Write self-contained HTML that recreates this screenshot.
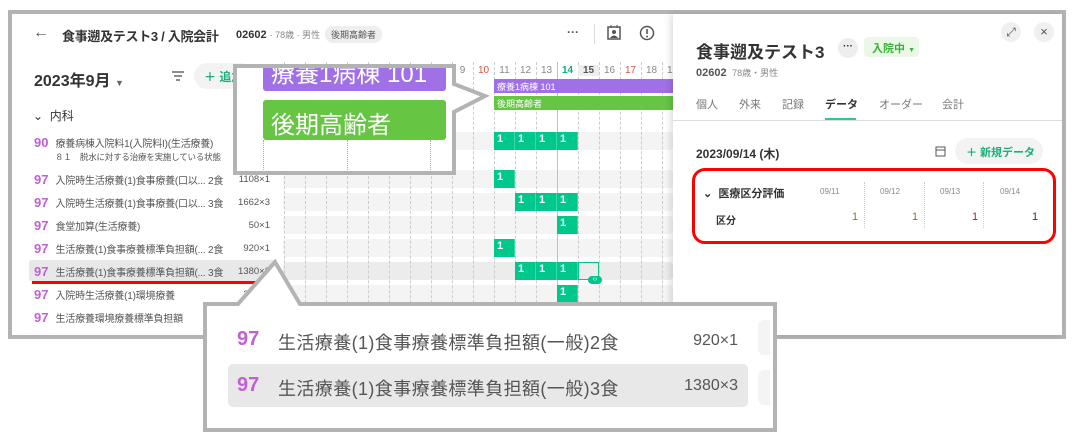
<!DOCTYPE html>
<html><head><meta charset="utf-8"><style>
*{margin:0;padding:0;box-sizing:border-box}
body{width:1074px;height:440px;background:#fff;position:relative;overflow:hidden;font-family:"Liberation Sans","Noto Sans CJK JP",sans-serif;color:#333}
.a{position:absolute;white-space:nowrap}
.num{color:#c25fd6;font-weight:bold;font-size:13px}
.t{font-size:10px;color:#555;letter-spacing:-0.2px}
.q{position:absolute;width:60px;text-align:right;left:210px;font-size:9.5px;color:#555}
.rowbg{position:absolute;left:283px;width:390px;height:18px;background:#f4f4f4;border-radius:4px}
.vl{position:absolute;top:62px;height:276px;border-left:1px dashed #ccc}
.cell{position:absolute;width:21px;height:18px;background:#00c78c;color:#fff;font-weight:bold;font-size:11px;padding:1px 0 0 3px;border-right:1px solid #3ad9a6}
.day{position:absolute;top:65px;font-size:10px;color:#888;width:21px;text-align:center}
</style></head><body>
<div class="a" style="left:8px;top:10px;width:1058px;height:329px;border:4px solid #b3b3b3;background:#fff"></div>
<div class="a" style="left:33px;top:24px;font-size:16px;color:#555">←</div>
<div class="a" style="left:62px;top:26px;font-size:13px;font-weight:bold;color:#333;letter-spacing:-0.3px">食事遡及テスト3 / 入院会計</div>
<div class="a" style="left:236px;top:28px;font-size:11px;font-weight:bold;color:#333">02602 <span style="font-weight:normal;color:#888;font-size:9px">· 78歳 · 男性</span></div>
<div class="a" style="left:325px;top:26px;font-size:9px;color:#555;background:#eee;border-radius:8px;padding:2px 6px">後期高齢者</div>
<div class="a" style="left:567px;top:25px;font-size:12px;color:#555;font-weight:bold">···</div>
<div class="a" style="left:594px;top:24px;width:1px;height:20px;background:#ddd"></div>
<svg class="a" style="left:606px;top:25px" width="16" height="16"><rect x="2" y="2" width="12" height="12" fill="none" stroke="#555" stroke-width="1.5"/><circle cx="8" cy="7" r="2" fill="#555"/><path d="M4 13 Q8 8 12 13" fill="#555"/><line x1="5" y1="0" x2="5" y2="3" stroke="#555"/><line x1="11" y1="0" x2="11" y2="3" stroke="#555"/></svg>
<svg class="a" style="left:639px;top:25px" width="16" height="16"><circle cx="8" cy="8" r="6.5" fill="none" stroke="#555" stroke-width="1.5"/><line x1="8" y1="4" x2="8" y2="9" stroke="#555" stroke-width="1.6"/><circle cx="8" cy="11.5" r="1" fill="#555"/></svg>
<div class="a" style="left:34px;top:67px;font-size:16px;font-weight:bold;color:#333">2023年9月 <span style="font-size:9px;color:#666">▼</span></div>
<svg class="a" style="left:171px;top:70px" width="14" height="12"><path d="M1 2H13M3 6H11M5 10H9" stroke="#666" stroke-width="1.5"/></svg>
<div class="a" style="left:194px;top:63px;width:60px;height:26px;background:#f3f3f3;border-radius:13px;font-size:12px;color:#1eae78;font-weight:bold;padding:5px 0 0 10px">＋ 追加</div>
<div class="a" style="left:33px;top:107px;font-size:12px;color:#333">⌄&nbsp;&nbsp;内科</div>
<div class="rowbg" style="top:132px"></div>
<div class="rowbg" style="top:170px"></div>
<div class="rowbg" style="top:193px"></div>
<div class="rowbg" style="top:216px"></div>
<div class="rowbg" style="top:239px"></div>
<div class="rowbg" style="top:262px;background:#ececec"></div>
<div class="rowbg" style="top:285px"></div>
<div class="vl" style="left:284px"></div><div class="vl" style="left:305px"></div><div class="vl" style="left:326px"></div><div class="vl" style="left:347px"></div><div class="vl" style="left:368px"></div><div class="vl" style="left:389px"></div><div class="vl" style="left:410px"></div><div class="vl" style="left:431px"></div><div class="vl" style="left:452px"></div><div class="vl" style="left:473px"></div><div class="vl" style="left:494px"></div><div class="vl" style="left:515px"></div><div class="vl" style="left:536px"></div><div class="vl" style="left:578px"></div><div class="vl" style="left:599px"></div><div class="vl" style="left:620px"></div><div class="vl" style="left:641px"></div><div class="vl" style="left:662px"></div>
<div class="a" style="left:557px;top:62px;width:1px;height:276px;background:#7fe0c0"></div>
<div class="day" style="left:452px">9</div><div class="day" style="left:473px;color:#e0523a">10</div><div class="day" style="left:494px">11</div><div class="day" style="left:515px">12</div><div class="day" style="left:536px">13</div><div class="day" style="left:557px;color:#00b37a;font-weight:bold">14</div><div class="day" style="left:578px;background:#eee;font-weight:bold;color:#555">15</div><div class="day" style="left:599px">16</div><div class="day" style="left:620px;color:#e0523a">17</div><div class="day" style="left:641px">18</div><div class="day" style="left:662px">19</div>
<div class="a" style="left:494px;top:79px;width:180px;height:14px;background:#a070e6;color:#fff;font-size:9px;padding:1px 3px">療養1病棟 101</div>
<div class="a" style="left:494px;top:96px;width:180px;height:14px;background:#66c644;color:#fff;font-size:9px;padding:1px 3px">後期高齢者</div>
<div class="cell" style="left:494px;top:132px">1</div><div class="cell" style="left:515px;top:132px">1</div><div class="cell" style="left:536px;top:132px">1</div><div class="cell" style="left:557px;top:132px">1</div>
<div class="cell" style="left:494px;top:170px">1</div>
<div class="cell" style="left:515px;top:193px">1</div><div class="cell" style="left:536px;top:193px">1</div><div class="cell" style="left:557px;top:193px">1</div>
<div class="cell" style="left:557px;top:216px">1</div>
<div class="cell" style="left:494px;top:239px">1</div>
<div class="cell" style="left:515px;top:262px">1</div><div class="cell" style="left:536px;top:262px">1</div><div class="cell" style="left:557px;top:262px">1</div>
<div class="a" style="left:578px;top:262px;width:21px;height:18px;border:1px solid #00c78c"></div>
<div class="a" style="left:588px;top:276px;width:14px;height:8px;background:#00c78c;border-radius:4px;color:#fff;font-size:7px;text-align:center;line-height:8px">‹›</div>
<div class="cell" style="left:557px;top:285px">1</div>
<div class="a" style="left:34px;top:134px"><span class="num">90</span> <span class="t">&nbsp;療養病棟入院料1(入院料I)(生活療養)</span></div>
<div class="a t" style="left:55px;top:151px;font-size:8.5px">８１　脱水に対する治療を実施している状態</div>
<div class="a" style="left:34px;top:171px"><span class="num">97</span> <span class="t">&nbsp;入院時生活療養(1)食事療養(口以... 2食</span></div><div class="q" style="top:174px">1108×1</div>
<div class="a" style="left:34px;top:194px"><span class="num">97</span> <span class="t">&nbsp;入院時生活療養(1)食事療養(口以... 3食</span></div><div class="q" style="top:197px">1662×3</div>
<div class="a" style="left:34px;top:217px"><span class="num">97</span> <span class="t">&nbsp;食堂加算(生活療養)</span></div><div class="q" style="top:220px">50×1</div>
<div class="a" style="left:34px;top:240px"><span class="num">97</span> <span class="t">&nbsp;生活療養(1)食事療養標準負担額(... 2食</span></div><div class="q" style="top:243px">920×1</div>
<div class="a" style="left:29px;top:260px;width:247px;height:21px;background:#e8e8e8;border-radius:3px"></div>
<div class="a" style="left:34px;top:263px"><span class="num">97</span> <span class="t">&nbsp;生活療養(1)食事療養標準負担額(... 3食</span></div><div class="q" style="top:266px">1380×3</div>
<div class="a" style="left:32px;top:281px;width:242px;height:3px;background:#f00"></div>
<div class="a" style="left:34px;top:286px"><span class="num">97</span> <span class="t">&nbsp;入院時生活療養(1)環境療養</span></div><div class="q" style="top:289px">398×1</div>
<div class="a" style="left:34px;top:309px"><span class="num">97</span> <span class="t">&nbsp;生活療養環境療養標準負担額</span></div>
<div class="a" style="left:673px;top:14px;width:389px;height:321px;background:#fff;box-shadow:-3px 0 6px rgba(0,0,0,.12)"></div>
<div class="a" style="left:696px;top:38px;font-size:17px;font-weight:bold;color:#333">食事遡及テスト3</div>
<div class="a" style="left:838px;top:38px;width:20px;height:20px;border-radius:10px;background:#eee;font-size:10px;text-align:center;line-height:18px;font-weight:bold">···</div>
<div class="a" style="left:864px;top:37px;width:55px;height:20px;border-radius:4px;background:#ebf8e8;font-size:11px;color:#3bb33b;font-weight:bold;padding:3px 0 0 8px">入院中 <span style="font-size:7px">▼</span></div>
<div class="a" style="left:696px;top:66px;font-size:11px;font-weight:bold;color:#555">02602 <span style="font-weight:normal;color:#888;font-size:9px">&nbsp;78歳・男性</span></div>
<div class="a" style="left:1001px;top:22px;width:20px;height:20px;border-radius:10px;background:#f0f0f0;font-size:12px;text-align:center;line-height:20px;color:#555">⤢</div>
<div class="a" style="left:1034px;top:22px;width:20px;height:20px;border-radius:10px;background:#f0f0f0;font-size:13px;text-align:center;line-height:20px;color:#555">×</div>
<div class="a" style="left:696px;top:96px;font-size:11px;color:#777">個人</div>
<div class="a" style="left:739px;top:96px;font-size:11px;color:#777">外来</div>
<div class="a" style="left:782px;top:96px;font-size:11px;color:#777">記録</div>
<div class="a" style="left:825px;top:96px;font-size:11px;color:#333;font-weight:bold">データ</div>
<div class="a" style="left:879px;top:96px;font-size:11px;color:#777">オーダー</div>
<div class="a" style="left:942px;top:96px;font-size:11px;color:#777">会計</div>
<div class="a" style="left:673px;top:120px;width:389px;height:1px;background:#ddd"></div>
<div class="a" style="left:825px;top:118px;width:31px;height:2px;background:#2ec79a"></div>
<div class="a" style="left:696px;top:145px;font-size:12px;font-weight:bold;color:#333">2023/09/14 (木)</div>
<svg class="a" style="left:935px;top:145px" width="11" height="12"><rect x="1" y="2" width="9" height="9" fill="none" stroke="#555"/><line x1="1" y1="5" x2="10" y2="5" stroke="#555"/></svg>
<div class="a" style="left:955px;top:138px;width:88px;height:26px;background:#f3f3f3;border-radius:13px;font-size:11px;color:#1eae78;font-weight:bold;padding:6px 0 0 11px">＋ 新規データ</div>
<div class="a" style="left:692px;top:168px;width:364px;height:76px;border:3px solid #f00;border-radius:13px"></div>
<div class="a" style="left:703px;top:185px;font-size:11px;font-weight:bold;color:#333">⌄&nbsp;&nbsp;医療区分評価</div>
<div class="a" style="left:716px;top:212px;font-size:10px;font-weight:bold;color:#333">区分</div>
<div class="a" style="left:820px;top:187px;font-size:8px;color:#888">09/11</div><div class="a" style="left:880px;top:187px;font-size:8px;color:#888">09/12</div><div class="a" style="left:940px;top:187px;font-size:8px;color:#888">09/13</div><div class="a" style="left:1000px;top:187px;font-size:8px;color:#888">09/14</div>
<div class="a" style="left:864px;top:182px;height:46px;border-left:1px dotted #ccc"></div><div class="a" style="left:924px;top:182px;height:46px;border-left:1px dotted #ccc"></div><div class="a" style="left:983px;top:182px;height:46px;border-left:1px dotted #ccc"></div>
<div class="a" style="left:852px;top:211px;font-size:11px;color:#a07020">1</div><div class="a" style="left:912px;top:211px;font-size:11px;color:#a07020">1</div><div class="a" style="left:972px;top:211px;font-size:11px;color:#9a2a2a">1</div><div class="a" style="left:1032px;top:211px;font-size:11px;color:#333">1</div>
<svg class="a" style="left:0;top:0" width="1074" height="440">
<path d="M235 66 H454 V84 L485 96 L454 112 V173 H235 Z" fill="#fff" stroke="#b3b3b3" stroke-width="4"/>
<path d="M205 304 H238 L275 262 L300 304 H775 V430 H205 Z" fill="#fff" stroke="#b3b3b3" stroke-width="4"/>
</svg>
<div class="a" style="left:263px;top:68px;width:183px;height:23px;background:#a070e6;border-radius:0 0 3px 3px;overflow:hidden"><div style="color:#fff;font-size:24px;margin-top:-14px;padding-left:8px">療養1病棟 101</div></div>
<div class="a" style="left:263px;top:100px;width:183px;height:40px;background:#66c644;border-radius:3px;color:#fff;font-size:24px;padding:5px 0 0 8px">後期高齢者</div>
<div class="a" style="left:263px;top:140px;height:30px;border-left:1px dotted #aaa"></div><div class="a" style="left:347px;top:140px;height:30px;border-left:1px dotted #aaa"></div><div class="a" style="left:430px;top:140px;height:30px;border-left:1px dotted #aaa"></div>
<div class="a" style="left:228px;top:364px;width:520px;height:43px;background:#e8e8e8;border-radius:5px"></div>
<div class="a" style="left:758px;top:320px;width:12px;height:35px;background:#f4f4f4;border-radius:6px 0 0 6px"></div>
<div class="a" style="left:758px;top:370px;width:12px;height:35px;background:#f4f4f4;border-radius:6px 0 0 6px"></div>
<div class="a" style="left:237px;top:328px;font-size:20px;font-weight:bold;color:#c25fd6">97</div>
<div class="a" style="left:278px;top:329px;font-size:18px;color:#555;letter-spacing:0.4px">生活療養(1)食事療養標準負担額(一般)2食</div>
<div class="a" style="left:640px;width:98px;text-align:right;top:332px;font-size:16px;color:#555">920×1</div>
<div class="a" style="left:237px;top:374px;font-size:20px;font-weight:bold;color:#c25fd6">97</div>
<div class="a" style="left:278px;top:375px;font-size:18px;color:#555;letter-spacing:0.4px">生活療養(1)食事療養標準負担額(一般)3食</div>
<div class="a" style="left:640px;width:98px;text-align:right;top:377px;font-size:16px;color:#555">1380×3</div>
</body></html>
